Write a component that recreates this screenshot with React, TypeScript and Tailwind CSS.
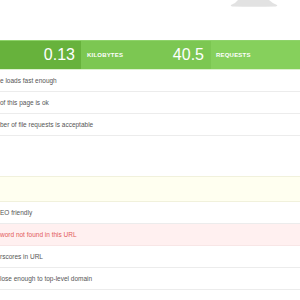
import React from "react";

const Row = ({ children, cls = "" }: { children?: React.ReactNode; cls?: string }) => (
  <div className={`h-[22px] border-b border-[#ececec] flex items-center text-[6.5px] text-[#555555] whitespace-nowrap ${cls}`}>
    {children}
  </div>
);

export default function App() {
  return (
    <div className="w-[300px] h-[300px] bg-white overflow-hidden" style={{ fontFamily: '"Liberation Sans", Arial, sans-serif' }}>
      <div className="relative h-[40px]">
        <svg className="absolute left-[229px] top-0" width="50" height="8" viewBox="0 0 50 8">
          <path d="M9 0 H40 Q43 3 48 5 Q49 6 47 6.4 Q25 7 3 6.4 Q1 6 2 5 Q7 3 9 0Z" fill="#e2e2e2" />
        </svg>
      </div>
      <div className="flex h-[30px] border-t border-[#8ed36a] border-b border-b-[#dcf1cf] text-white">
        <div className="w-[81px] bg-[#67b23c] flex items-center justify-end pr-[6px] text-[16px] leading-none">0.13</div>
        <div className="w-[130px] bg-[#7cc752] flex items-center justify-between pl-[6px] pr-[7px]">
          <span className="text-[6px] font-bold tracking-[0.2px]">KILOBYTES</span>
          <span className="text-[16px] leading-none">40.5</span>
        </div>
        <div className="flex-1 bg-[#86d05c] flex items-center pl-[5px]">
          <span className="text-[6px] font-bold tracking-[0.2px]">REQUESTS</span>
        </div>
      </div>
      <Row>e loads fast enough</Row>
      <Row>of this page is ok</Row>
      <Row>ber of file requests is acceptable</Row>
      <div className="h-[40px]" />
      <div className="h-[26px] bg-[#fffff0] border-y border-[#f1f1dc]" />
      <Row>EO friendly</Row>
      <Row cls="bg-[#fff0f0] text-[#e25a5a] border-[#f8e6e6]">word not found in this URL</Row>
      <Row>rscores in URL</Row>
      <Row>lose enough to top-level domain</Row>
    </div>
  );
}
